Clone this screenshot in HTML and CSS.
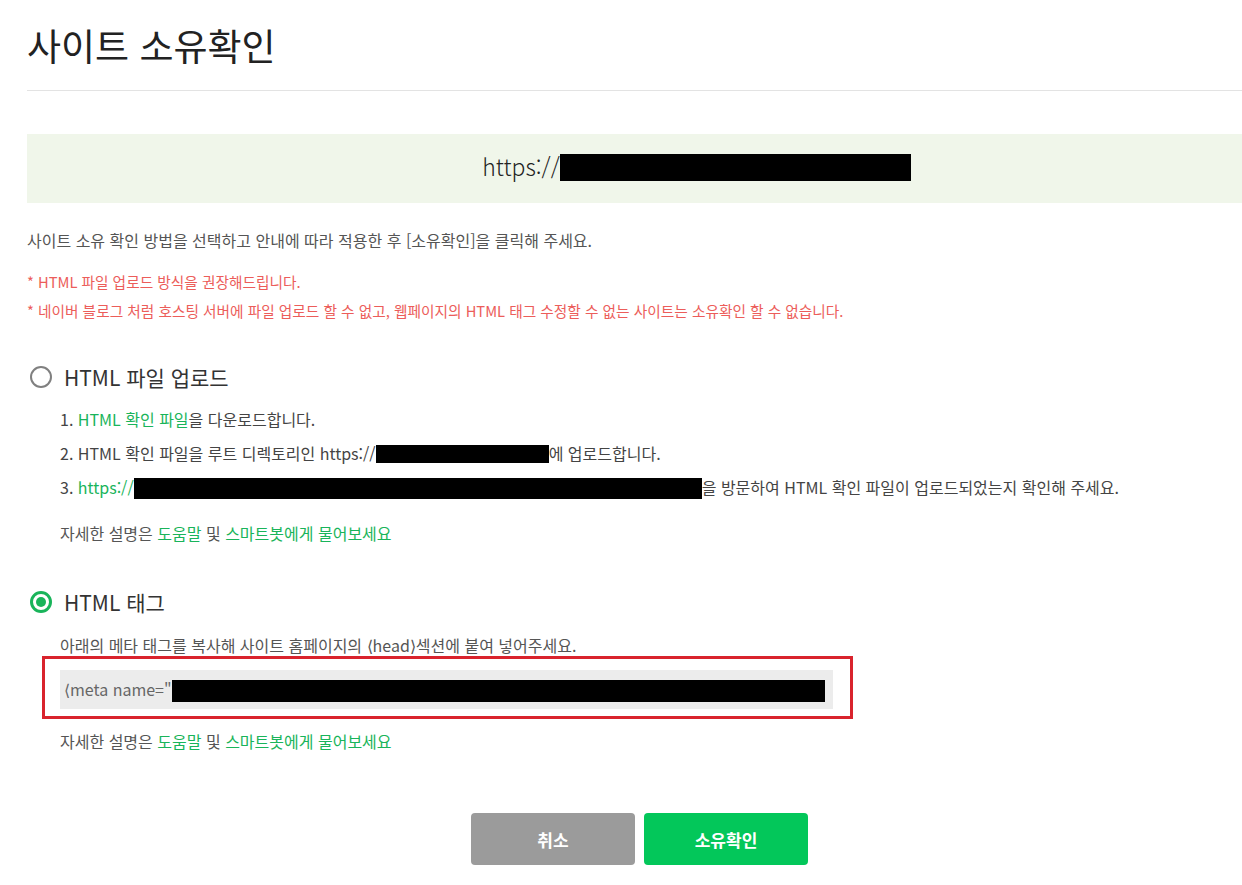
FILE: index.html
```html
<!DOCTYPE html>
<html lang="ko">
<head>
    <meta charset="UTF-8">
    <meta name="viewport" content="width=device-width, initial-scale=1.0">
    <title>사이트 소유확인</title>
    <link rel="stylesheet" href="styles.css">
</head>
<body>
    <h1 class="page-title">사이트 소유확인</h1>
    <hr class="divider">

    <!-- Site URL -->
    <div class="site-box">https://<span class="mask mask-site"></span></div>

    <p class="intro">사이트 소유 확인 방법을 선택하고 안내에 따라 적용한 후 [소유확인]을 클릭해 주세요.</p>
    <ul class="notes">
        <li>* HTML 파일 업로드 방식을 권장해드립니다.</li>
        <li>* 네이버 블로그 처럼 호스팅 서버에 파일 업로드 할 수 없고, 웹페이지의 HTML 태그 수정할 수 없는 사이트는 소유확인 할 수 없습니다.</li>
    </ul>

    <!-- Method 1 -->
    <label class="method method-first">
        <span class="radio"></span>HTML 파일 업로드
    </label>
    <ol class="steps">
        <li>1. <a href="#" class="link">HTML 확인 파일</a>을 다운로드합니다.</li>
        <li>2. HTML 확인 파일을 루트 디렉토리인 https://<span class="mask mask-root"></span>에 업로드합니다.</li>
        <li>3. <a href="#" class="link">https://<span class="mask mask-file"></span></a>을 방문하여 HTML 확인 파일이 업로드되었는지 확인해 주세요.</li>
    </ol>
    <p class="help help-first">자세한 설명은 <a href="#" class="link">도움말</a> 및 <a href="#" class="link">스마트봇에게 물어보세요</a></p>

    <!-- Method 2 -->
    <label class="method method-second">
        <span class="radio checked"></span>HTML 태그
    </label>
    <p class="desc">아래의 메타 태그를 복사해 사이트 홈페이지의 ⟨head⟩섹션에 붙여 넣어주세요.</p>
    <div class="highlight">
        <div class="code-box">⟨meta name="<span class="mask mask-meta"></span></div>
    </div>
    <p class="help help-second">자세한 설명은 <a href="#" class="link">도움말</a> 및 <a href="#" class="link">스마트봇에게 물어보세요</a></p>

    <!-- Buttons -->
    <div class="actions">
        <button class="btn btn-cancel">취소</button>
        <button class="btn btn-confirm">소유확인</button>
    </div>
</body>
</html>
```

FILE: styles.css
```css
/* Reset */
* {
    box-sizing: border-box;
    margin: 0;
    padding: 0;
}
body {
    font-family: "Noto Sans CJK KR", "Noto Sans", sans-serif;
    background: #fff;
    color: #444;
    padding-left: 27px;
    overflow-x: hidden;
}
ul, ol {
    list-style: none;
}
.link {
    color: #19b45a;
    text-decoration: none;
}

/* Title */
.page-title {
    font-size: 37px;
    font-weight: 400;
    line-height: 50px;
    color: #222;
    margin-top: 20px;
}
.divider {
    border: none;
    border-top: 1px solid #e3e3e3;
    margin-top: 20px;
}

/* Site box */
.site-box {
    margin-top: 43px;
    height: 69px;
    line-height: 64px;
    background-color: #f0f6ea;
    text-align: center;
    padding-left: 124px;
    font-size: 23px;
    font-weight: 300;
    color: #222;
    white-space: nowrap;
}
.mask {
    display: inline-block;
    background: #000;
    vertical-align: middle;
}
.mask-site {
    width: 351px;
    height: 27px;
    margin-top: -4px;
}
.mask-root {
    width: 173px;
    height: 18px;
    margin-top: -3px;
}
.mask-file {
    width: 568px;
    height: 21px;
    margin-top: -3px;
}
.mask-meta {
    width: 653px;
    height: 22px;
    margin-top: -2px;
}

/* Intro */
.intro {
    margin-top: 25px;
    font-size: 16px;
    line-height: 24px;
    color: #555;
}
.notes {
    margin-top: 15px;
    font-size: 14.7px;
    line-height: 29px;
    color: #ec5d5a;
}

/* Methods */
.method {
    display: flex;
    align-items: center;
    height: 30px;
    font-size: 21px;
    color: #333;
    cursor: pointer;
}
.method-first {
    margin-top: 37px;
}
.method-second {
    margin-top: 42px;
}
.radio {
    width: 22px;
    height: 22px;
    border: 2px solid #808080;
    border-radius: 50%;
    margin-left: 3px;
    margin-right: 12px;
    position: relative;
}
.radio.checked {
    border: 3px solid #19b45a;
}
.radio.checked::after {
    content: "";
    position: absolute;
    top: 3px;
    left: 3px;
    width: 10px;
    height: 10px;
    border-radius: 50%;
    background: #19b45a;
}

/* Steps */
.steps {
    margin-top: 10px;
    padding-left: 33px;
    font-size: 16px;
    line-height: 34px;
    color: #444;
    white-space: nowrap;
}
.help {
    padding-left: 33px;
    font-size: 16px;
    line-height: 24px;
    color: #555;
}
.help-first {
    margin-top: 17px;
}
.help-second {
    margin-top: 10px;
}
.desc {
    margin-top: 17px;
    padding-left: 33px;
    font-size: 16px;
    line-height: 22px;
    color: #555;
}

/* Meta tag box */
.highlight {
    margin-left: 15px;
    width: 811px;
    border: 3px solid #d9232d;
    padding: 11px 17px 7px 15px;
}
.code-box {
    height: 39px;
    line-height: 39px;
    background: #ececec;
    padding-left: 4px;
    font-size: 16px;
    color: #666;
    white-space: nowrap;
    overflow: hidden;
}

/* Buttons */
.actions {
    display: flex;
    gap: 9px;
    margin-top: 60px;
    padding-left: 444px;
}
.btn {
    width: 164px;
    height: 52px;
    border: none;
    border-radius: 4px;
    color: #fff;
    font-family: inherit;
    font-size: 17px;
    font-weight: 700;
    cursor: pointer;
}
.btn-cancel {
    background-color: #9b9b9b;
}
.btn-confirm {
    background-color: #03c75a;
}
```
